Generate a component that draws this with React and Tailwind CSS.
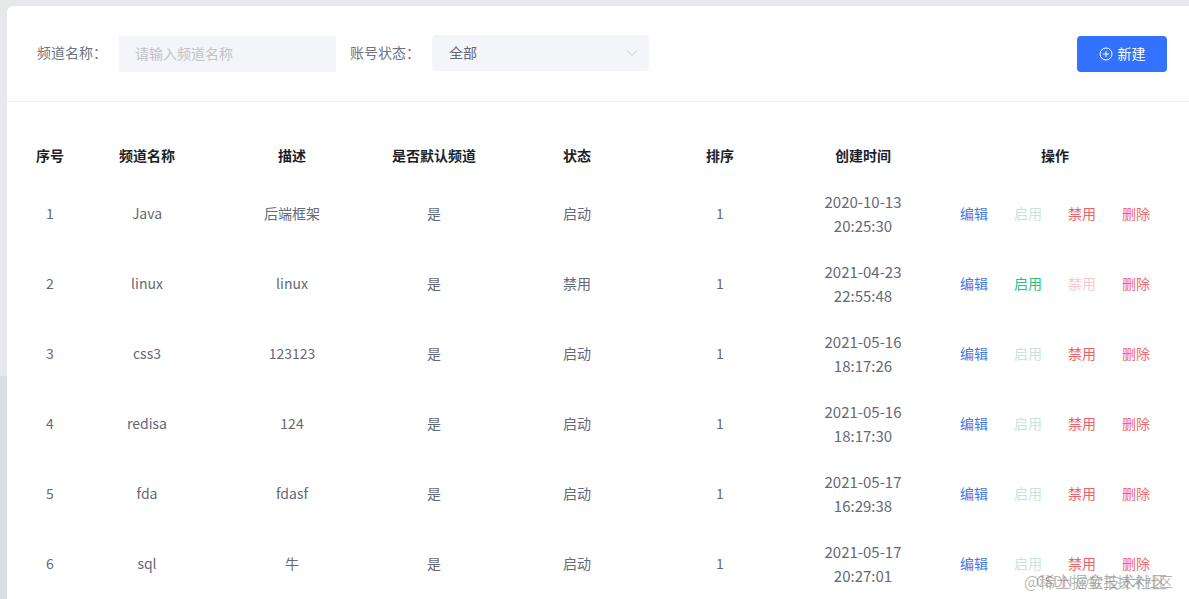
const ROWS = [
    { id: 1, name: "Java", desc: "后端框架", status: "启动", date: "2020-10-13", time: "20:25:30", enabled: true },
    { id: 2, name: "linux", desc: "linux", status: "禁用", date: "2021-04-23", time: "22:55:48", enabled: false },
    { id: 3, name: "css3", desc: "123123", status: "启动", date: "2021-05-16", time: "18:17:26", enabled: true },
    { id: 4, name: "redisa", desc: "124", status: "启动", date: "2021-05-16", time: "18:17:30", enabled: true },
    { id: 5, name: "fda", desc: "fdasf", status: "启动", date: "2021-05-17", time: "16:29:38", enabled: true },
    { id: 6, name: "sql", desc: "牛", status: "启动", date: "2021-05-17", time: "20:27:01", enabled: true },
];

const COLS = "grid grid-cols-[58px_136px_154px_130px_156px_130px_156px_228px] items-center text-center";

export default function App() {
    return (
        <div className="relative h-[599px] overflow-hidden bg-[#e7e8eb] pt-[6px] text-[14px] text-[#646977]" style={{ fontFamily: "'Noto Sans CJK SC','Noto Sans',sans-serif" }}>
            <div className="absolute bottom-0 left-0 h-[223px] w-[7px] bg-[#dcdee5]"></div>

            <div className="relative ml-[7px] h-[593px] rounded-tl-md bg-white">
                {/* filter bar */}
                <div className="flex h-[96px] items-center border-b border-[#ebedf0] pl-[30px] pr-[22px]">
                    <span className="mb-[4px] w-[82px] leading-none text-[#6e7380]">频道名称：</span>
                    <div className="flex h-[36px] w-[217px] items-center bg-[#f3f5f8] pl-[16px] text-[#c0c3ca]">请输入频道名称</div>
                    <span className="mb-[4px] ml-[14px] w-[82px] leading-none text-[#6e7380]">账号状态：</span>
                    <div className="-mt-[2px] flex h-[36px] w-[217px] items-center justify-between rounded-sm bg-[#f3f5f8] pl-[17px] pr-[11px] text-[#646977]">
                        全部
                        <svg width="12" height="12" viewBox="0 0 12 12" fill="none" stroke="#c0c3ca" strokeWidth="1">
                            <path d="M1 3.5 L6 8.5 L11 3.5" />
                        </svg>
                    </div>
                    <button className="ml-auto flex h-[36px] w-[90px] items-center justify-center gap-[5px] rounded bg-[#3371ff] text-white">
                        <svg width="14" height="14" viewBox="0 0 14 14" fill="none" stroke="white" strokeWidth="1">
                            <circle cx="7" cy="7" r="6" />
                            <path d="M7 4 V10 M4 7 H10" />
                        </svg>
                        新建
                    </button>
                </div>

                {/* table */}
                <div className="pl-[14px] pt-[30px]">
                    <div className={`${COLS} h-[46px] font-bold text-[#1b1f2a]`}>
                        <div>序号</div>
                        <div>频道名称</div>
                        <div>描述</div>
                        <div>是否默认频道</div>
                        <div>状态</div>
                        <div>排序</div>
                        <div>创建时间</div>
                        <div>操作</div>
                    </div>
                    {ROWS.map((row) => (
                        <div key={row.id} className={`${COLS} h-[70px]`}>
                            <div>{row.id}</div>
                            <div>{row.name}</div>
                            <div>{row.desc}</div>
                            <div>是</div>
                            <div>{row.status}</div>
                            <div>1</div>
                            <div className="mt-[2px] text-[15px] leading-[24px]">
                                <div>{row.date}</div>
                                <div>{row.time}</div>
                            </div>
                            <div className="flex justify-center gap-[26px]">
                                <span className="text-[#4a78e0]">编辑</span>
                                <span className={row.enabled ? "text-[#c8e4da]" : "text-[#2dbd85]"}>启用</span>
                                <span className={row.enabled ? "text-[#ee5f68]" : "text-[#f8c8ce]"}>禁用</span>
                                <span className="text-[#f0696f]">删除</span>
                            </div>
                        </div>
                    ))}
                </div>
            </div>

            {/* stacked image watermarks */}
            <div className="absolute bottom-[8px] left-[1024px] whitespace-nowrap text-[16px] leading-[20px] text-[#77777788]">@稀土掘金技术社区</div>
            <div className="absolute bottom-[8px] left-[1036px] whitespace-nowrap text-[14px] leading-[20px] text-[#77777788]">CSDN @软玉技术社区</div>
        </div>
    );
}
